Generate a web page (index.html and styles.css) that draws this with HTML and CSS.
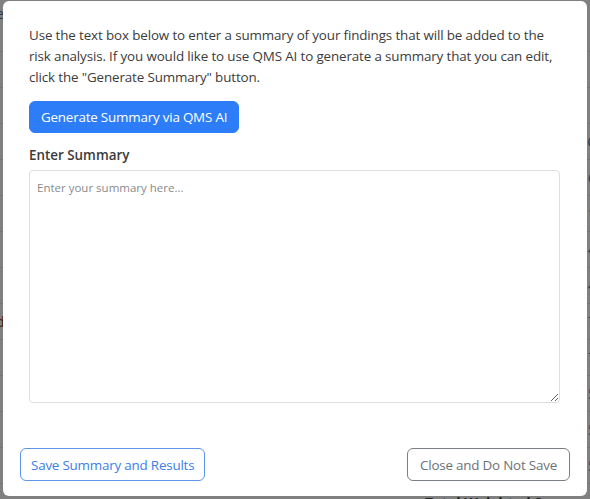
FILE: index.html
```html
<!DOCTYPE html>
<html>
<head>
<meta charset="utf-8">
<link rel="stylesheet" href="styles.css">
</head>
<body>
<div class="page">
  <div class="row head"><span class="l">e</span><span class="r"></span></div>
  <div class="row"><span class="l"></span><span class="r"></span></div>
  <div class="row"><span class="l"></span><span class="r">'</span></div>
  <div class="row"><span class="l"></span><span class="r">C</span></div>
  <div class="row"><span class="l"></span><span class="r">6</span></div>
  <div class="row"><span class="l"></span><span class="r dk">1</span></div>
  <div class="row"><span class="l"></span><span class="r">4</span></div>
  <div class="row"><span class="l"></span><span class="r">4</span></div>
  <div class="row"><span class="l dk">d</span><span class="r">7</span></div>
  <div class="row"><span class="l"></span><span class="r">7</span></div>
  <div class="row"><span class="l"></span><span class="r">5</span></div>
  <div class="row"><span class="l"></span><span class="r">5</span></div>
  <div class="row"><span class="l"></span><span class="r">5</span></div>
  <div class="total">Total Weighted Score</div>
</div>
<div class="modal">
  <div class="modal-body">
    <p class="intro">Use the text box below to enter a summary of your findings that will be added to the risk analysis. If you would like to use QMS AI to generate a summary that you can edit, click the "Generate Summary" button.</p>
    <button class="btn btn-primary">Generate Summary via QMS AI</button>
    <label class="label" for="summary">Enter Summary</label>
    <textarea id="summary" class="summary" placeholder="Enter your summary here..."></textarea>
  </div>
  <div class="modal-footer">
    <button class="btn btn-outline-primary">Save Summary and Results</button>
    <button class="btn btn-outline-secondary">Close and Do Not Save</button>
  </div>
</div>
</body>
</html>
```
FILE: styles.css
```css
html, body {
  margin: 0;
  padding: 0;
  width: 590px;
  height: 499px;
  overflow: hidden;
  font-family: "Open Sans", "Noto Sans", sans-serif;
}
body {
  background: #808080;
  position: relative;
}
.page {
  display: flex;
  flex-direction: column;
}
.row {
  height: 35px;
  border-bottom: 1px solid #737373;
  display: flex;
  justify-content: space-between;
  align-items: center;
  font-size: 14px;
  color: #2a3a4a;
}
.row.head {
  height: 52px;
  align-items: flex-start;
  padding-top: 4px;
  box-sizing: border-box;
}
.row .l { margin-left: -4px; }
.row .r { margin-right: -6px; }
.row .dk { color: #3a1a1a; }
.total {
  position: absolute;
  left: 425px;
  top: 493px;
  font-size: 14px;
  font-weight: 700;
  color: #222;
}
.modal {
  position: absolute;
  left: 3px;
  top: 1px;
  width: 584px;
  height: 495px;
  background: #fff;
  border-radius: 6px;
  display: flex;
  flex-direction: column;
  justify-content: space-between;
  box-sizing: border-box;
}
.modal-body {
  padding: 24px 27px 0 26px;
  display: flex;
  flex-direction: column;
  align-items: flex-start;
}
.intro {
  margin: 0;
  font-size: 13.4px;
  line-height: 21px;
  color: #3b3b3b;
  letter-spacing: -0.13px;
}
.btn {
  font-family: inherit;
  font-size: 13.4px;
  border-radius: 6px;
  padding: 0 10px;
  height: 33px;
  cursor: pointer;
  background: #fff;
  letter-spacing: -0.2px;
}
.btn-primary {
  margin-top: 13px;
  background: #2d7df8;
  border: 1px solid #2d7df8;
  color: #fff;
  height: 32px;
  padding: 0 11px;
}
.label {
  margin-top: 12px;
  font-size: 13.4px;
  font-weight: 600;
  color: #3a3a3a;
  line-height: 20px;
}
.summary {
  margin-top: 5px;
  width: 531px;
  height: 233px;
  box-sizing: border-box;
  border: 1px solid #dedede;
  border-radius: 4px;
  padding: 9px 7px;
  font-family: inherit;
  font-size: 11.5px;
  resize: vertical;
}
.summary::placeholder { color: #8a8a8a; }
.modal-footer {
  display: flex;
  justify-content: space-between;
  padding: 0 17px 15px 17px;
}
.btn-outline-primary {
  border: 1px solid #5f95e6;
  color: #3d7ee6;
}
.btn-outline-secondary {
  border: 1px solid #7a7f85;
  color: #6c7178;
  padding: 0 12px;
}
```
